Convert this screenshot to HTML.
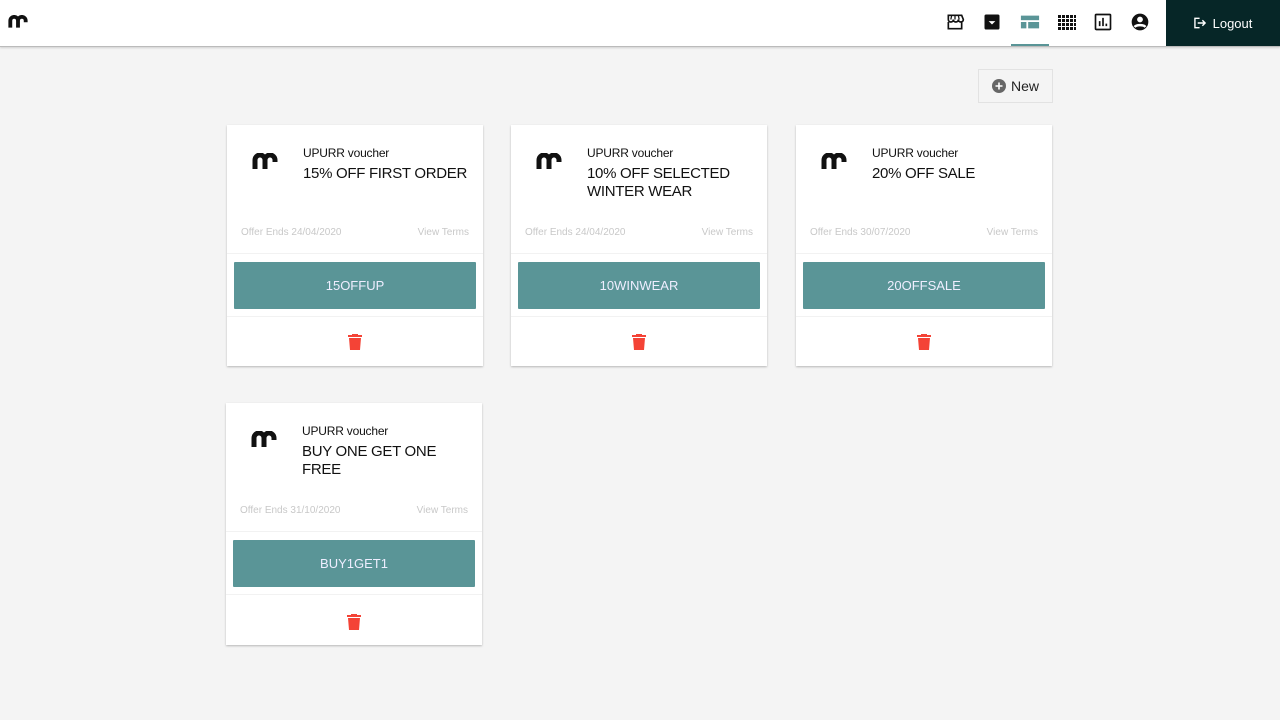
<!DOCTYPE html>
<html><head><style>
*{box-sizing:border-box;margin:0;padding:0}
body{width:1280px;height:720px;background:#f4f4f4;font-family:"Liberation Sans",Arial,sans-serif;position:relative;overflow:hidden}
.top{position:absolute;left:0;top:0;width:1280px;height:47px;background:#fff;border-bottom:1px solid #bbb;box-shadow:0 1px 2px rgba(0,0,0,.15)}
.logout{position:absolute;left:1166px;top:0;width:114px;height:46px;background:#062627;color:#fff;font-size:13px;display:flex;align-items:center;justify-content:center;gap:6px}
.ic{position:absolute;top:12px}
.new{position:absolute;left:978px;top:69px;width:75px;height:34px;border:1px solid #e2e2e2;background:#f4f4f4;font-size:14px;color:#222;display:flex;align-items:center;justify-content:center;gap:5px}
.card{position:absolute;width:256px;height:241px;background:#fff;box-shadow:0 1px 2px rgba(0,0,0,.25)}
.card .lg{position:absolute;left:25px;top:28px}
.card .sub{position:absolute;left:76px;top:21px;font-size:12px;color:#111;letter-spacing:-.2px}
.card .tt{position:absolute;left:76px;top:40px;font-size:15px;color:#111;line-height:18px;width:175px;letter-spacing:-.3px}
.card .meta{position:absolute;left:14px;right:14px;top:102px;font-size:10px;color:#c8c8c8;display:flex;justify-content:space-between}
.card .hr1{position:absolute;left:0;right:0;top:128px;border-top:1px solid #f2f2f2}
.card .btn{position:absolute;left:7px;right:7px;top:137px;height:47px;background:#5a9597;color:#eef;font-size:13px;display:flex;align-items:center;justify-content:center;border-radius:1px}
.card .hr2{position:absolute;left:0;right:0;top:191px;border-top:1px solid #f2f2f2}
.card .del{position:absolute;left:121px;top:209px}
</style></head><body>
<div class="top">
<svg style="position:absolute;left:8px;top:15px" width="20" height="13" viewBox="0 0 26 16"><path d="M3 16V7a5 5 0 0 1 10 0v9M13 7a5 5 0 0 1 10 0v2" fill="none" stroke="#111" stroke-width="5"/></svg>
<svg class="ic" style="left:945px" width="20" height="20" viewBox="0 0 24 24"><path d="M4 4h16l2 5c0 2-1.5 3-3 3s-3-1-3-3c0 2-1.5 3-3 3s-3-1-3-3c0 2-1.5 3-3 3s-3-1-3-3z M4 12v8h16v-8" fill="none" stroke="#111" stroke-width="2"/><path d="M8 4l-1 5M12 4v5M16 4l1 5" stroke="#111" stroke-width="1.5"/></svg>
<svg class="ic" style="left:982px" width="20" height="20" viewBox="0 0 24 24"><rect x="3" y="3" width="18" height="18" rx="2" fill="#111"/><path d="M8 11h8l-4 4z" fill="#fff"/></svg>
<svg class="ic" style="left:1019px" width="22" height="20" viewBox="0 0 24 22"><rect x="2" y="4" width="20" height="5" fill="#5a9597"/><rect x="2" y="11" width="6" height="7" fill="#5a9597"/><rect x="10" y="11" width="12" height="7" fill="#5a9597"/></svg>
<div style="position:absolute;left:1011px;top:44px;width:38px;height:2px;background:#5a9597"></div>
<svg class="ic" style="left:1057px" width="20" height="20" viewBox="0 0 20 20" fill="#111"><g id="r"><rect x="1" y="3" width="3" height="3"/><rect x="5" y="3" width="3" height="3"/><rect x="9" y="3" width="3" height="3"/><rect x="13" y="3" width="3" height="3"/><rect x="17" y="3" width="2" height="3"/></g><use href="#r" y="4"/><use href="#r" y="8"/><use href="#r" y="12"/></svg>
<svg class="ic" style="left:1093px" width="20" height="20" viewBox="0 0 24 24"><rect x="3" y="3" width="18" height="18" rx="1" fill="none" stroke="#111" stroke-width="2"/><path d="M8 17v-6M12 17V7M16 17v-3" stroke="#111" stroke-width="2"/></svg>
<svg class="ic" style="left:1130px" width="20" height="20" viewBox="0 0 24 24"><circle cx="12" cy="12" r="10" fill="#111"/><circle cx="12" cy="9" r="3.5" fill="#fff"/><path d="M5.5 18c2-3 11-3 13 0" stroke="#fff" stroke-width="3" fill="none"/></svg>
<div class="logout"><svg width="13" height="12" viewBox="0 0 14 12"><path d="M6 1H1v10h5" fill="none" stroke="#fff" stroke-width="1.5"/><path d="M4 6h7M9 3l3 3-3 3" fill="none" stroke="#fff" stroke-width="1.5"/></svg>Logout</div>
</div>
<div class="new"><svg width="14" height="14" viewBox="0 0 14 14"><circle cx="7" cy="7" r="7" fill="#666"/><path d="M7 3.5v7M3.5 7h7" stroke="#fff" stroke-width="1.6"/></svg>New</div>

<div class="card" style="left:227px;top:125px"><svg class="lg" width="26" height="16" viewBox="0 0 26 16"><path d="M3 16V7a5 5 0 0 1 10 0v9M13 7a5 5 0 0 1 10 0v2" fill="none" stroke="#111" stroke-width="5"/></svg><div class="sub">UPURR voucher</div><div class="tt">15% OFF FIRST ORDER</div><div class="meta"><span>Offer Ends 24/04/2020</span><span>View Terms</span></div><div class="hr1"></div><div class="btn">15OFFUP</div><div class="hr2"></div><svg class="del" width="14" height="16" viewBox="0 0 14 16"><path d="M4 0h6v1h4v2H0V1h4z M1 4h12l-1 12H2z" fill="#f44336"/></svg></div>

<div class="card" style="left:511px;top:125px"><svg class="lg" width="26" height="16" viewBox="0 0 26 16"><path d="M3 16V7a5 5 0 0 1 10 0v9M13 7a5 5 0 0 1 10 0v2" fill="none" stroke="#111" stroke-width="5"/></svg><div class="sub">UPURR voucher</div><div class="tt" style="width:150px">10% OFF SELECTED WINTER WEAR</div><div class="meta"><span>Offer Ends 24/04/2020</span><span>View Terms</span></div><div class="hr1"></div><div class="btn">10WINWEAR</div><div class="hr2"></div><svg class="del" width="14" height="16" viewBox="0 0 14 16"><path d="M4 0h6v1h4v2H0V1h4z M1 4h12l-1 12H2z" fill="#f44336"/></svg></div>

<div class="card" style="left:796px;top:125px"><svg class="lg" width="26" height="16" viewBox="0 0 26 16"><path d="M3 16V7a5 5 0 0 1 10 0v9M13 7a5 5 0 0 1 10 0v2" fill="none" stroke="#111" stroke-width="5"/></svg><div class="sub">UPURR voucher</div><div class="tt">20% OFF SALE</div><div class="meta"><span>Offer Ends 30/07/2020</span><span>View Terms</span></div><div class="hr1"></div><div class="btn">20OFFSALE</div><div class="hr2"></div><svg class="del" width="14" height="16" viewBox="0 0 14 16"><path d="M4 0h6v1h4v2H0V1h4z M1 4h12l-1 12H2z" fill="#f44336"/></svg></div>

<div class="card" style="left:226px;top:403px;height:242px"><svg class="lg" width="26" height="16" viewBox="0 0 26 16"><path d="M3 16V7a5 5 0 0 1 10 0v9M13 7a5 5 0 0 1 10 0v2" fill="none" stroke="#111" stroke-width="5"/></svg><div class="sub">UPURR voucher</div><div class="tt" style="width:150px">BUY ONE GET ONE FREE</div><div class="meta"><span>Offer Ends 31/10/2020</span><span>View Terms</span></div><div class="hr1"></div><div class="btn">BUY1GET1</div><div class="hr2"></div><svg class="del" width="14" height="16" viewBox="0 0 14 16" style="top:211px"><path d="M4 0h6v1h4v2H0V1h4z M1 4h12l-1 12H2z" fill="#f44336"/></svg></div>
</body></html>
